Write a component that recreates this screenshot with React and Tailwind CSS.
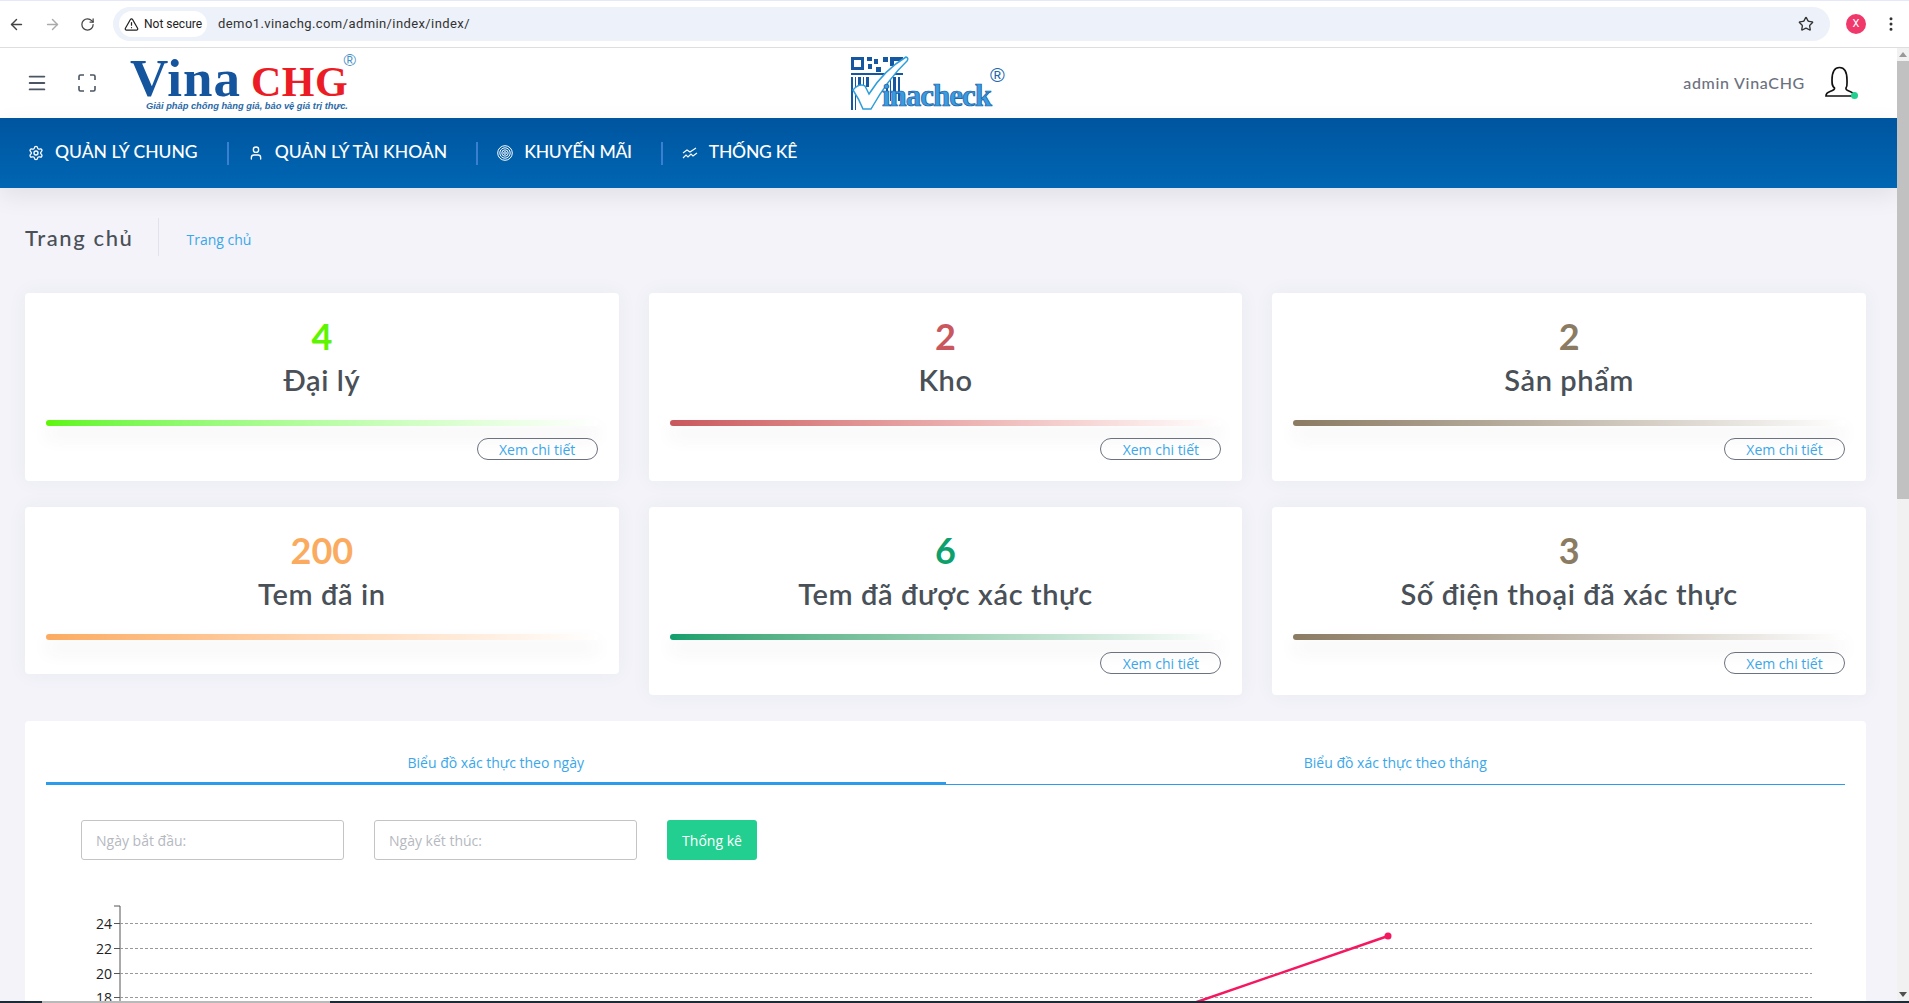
import React from "react";
import {
  ArrowLeft,
  ArrowRight,
  RotateCw,
  TriangleAlert,
  Star,
  EllipsisVertical,
  Menu,
  Settings,
  User,
} from "lucide-react";

const cardsTop = [
  { value: "4", label: "Đại lý", color: "text-[#5df500]", bar: "from-[#5df500]", link: true },
  { value: "2", label: "Kho", color: "text-[#c9575d]", bar: "from-[#c9575d]", link: true },
  { value: "2", label: "Sản phẩm", color: "text-[#8b7b63]", bar: "from-[#8b7b63]", link: true },
];

const cardsBottom = [
  { value: "200", label: "Tem đã in", color: "text-[#fbab60]", bar: "from-[#fbab60]", link: false },
  { value: "6", label: "Tem đã được xác thực", color: "text-[#0d9f6c]", bar: "from-[#0d9f6c]", link: true },
  { value: "3", label: "Số điện thoại đã xác thực", color: "text-[#8b7b63]", bar: "from-[#8b7b63]", link: true },
];

const FocusIcon = () => (
  <svg width="18" height="18" viewBox="0 0 18 18" fill="none" stroke="#4b5563" strokeWidth="1.6">
    <path d="M1 6V2.500A1.500 1.500 0 0 1 2.500 1H6M12 1h3.500A1.500 1.500 0 0 1 17 2.500V6M17 12v3.500a1.500 1.500 0 0 1-1.500 1.500H12M6 17H2.500A1.500 1.500 0 0 1 1 15.500V12" />
  </svg>
);

const TargetIcon = () => (
  <svg width="16" height="16" viewBox="0 0 16 16" fill="none" stroke="white" strokeWidth="1">
    <circle cx="8" cy="8" r="7.300" />
    <circle cx="8" cy="8" r="5.200" />
    <circle cx="8" cy="8" r="3.200" />
    <circle cx="8" cy="8" r="1.300" />
  </svg>
);

const StatsIcon = () => (
  <svg width="16" height="14" viewBox="0 0 16 14" fill="none" stroke="white" strokeWidth="1.100">
    <path d="M1 7 5 4l3 2 6-4" />
    <path d="M1 12l3-3 2 2 3-3 2 2 4-3" />
  </svg>
);

const AdminIcon = () => (
  <svg width="32" height="34" viewBox="0 0 32 34" fill="none" stroke="#111" strokeWidth="1.700">
    <path d="M8 14C8 5 11 1.500 15.500 1.500S23 5 23 14c0 4 .5 6-1 8-.5 1.500 1 2.500 4 3.500 3 1 4 2 4 4.500H2c0-2.500 1-3.500 4-4.500 3-1 5-2 4.500-3.500C8 20 8 18 8 14Z" />
  </svg>
);

const VinaChgLogo = () => (
  <div className="relative w-[228px] h-[62px] ml-[34px] mt-[-1px] font-['Liberation_Serif',serif] font-bold">
    <div className="flex items-baseline h-[50px] leading-none">
      <span className="text-[53px] tracking-[1px] text-[#14559e]">Vina</span>
      <span className="text-[42px] text-[#ec1c24] ml-[10px] tracking-[0.5px]">CHG</span>
    </div>
    <span className="absolute right-[2px] top-[-4px] text-[17px] font-normal text-[#4a8fc7] font-['Liberation_Sans',sans-serif]">®</span>
    <p className="absolute left-[16px] top-[48px] whitespace-nowrap text-[9.300px] italic text-[#2a69a8] font-['Liberation_Sans',sans-serif]">
      Giải pháp chống hàng giả, bảo vệ giá trị thực.
    </p>
  </div>
);

const VinacheckLogo = () => (
  <div className="relative w-[155px] h-[56px]">
    <svg width="60" height="56" viewBox="0 0 60 56" className="absolute left-0 top-0">
      <g fill="#1557a0">
        <path fillRule="evenodd" d="M1 2h13v13H1Zm3 3v7h7V5Z" />
        <rect x="17" y="2" width="5" height="4" />
        <rect x="24" y="4" width="4" height="5" />
        <rect x="18" y="9" width="4" height="5" />
        <rect x="26" y="12" width="5" height="5" />
        <rect x="33" y="2" width="5" height="5" />
        <path fillRule="evenodd" d="M40 2h13v4H44v5h-4Z" />
        <rect x="1" y="18" width="52" height="2" />
        <rect x="1" y="22" width="2" height="33" />
        <rect x="5" y="22" width="1" height="33" />
        <rect x="8" y="22" width="3" height="18" />
        <rect x="13" y="22" width="1" height="18" />
        <rect x="16" y="22" width="3" height="10" />
        <rect x="36" y="22" width="2" height="24" />
        <rect x="40" y="22" width="1" height="24" />
        <rect x="43" y="22" width="3" height="24" />
        <rect x="48" y="22" width="2" height="24" />
      </g>
      <path d="M3 35 Q9 28 15 31 L19 39 Q34 15 56 2 Q59 3 57 6 Q38 24 21 54 L13 54 Q9 44 3 35 Z" fill="#fff" stroke="#2f9fdc" strokeWidth="1.500" />
    </svg>
    <span className="absolute left-[32px] top-[25px] text-[31px] leading-none font-bold tracking-[-1px] text-[#3a9be0] font-['Liberation_Serif',serif] [-webkit-text-stroke:0.7px_#14589f]">
      inacheck
    </span>
    <span className="absolute left-[140px] top-[10px] text-[20px] leading-none text-[#2266ad] font-['Liberation_Sans',sans-serif]">®</span>
  </div>
);

const BrowserBar = () => (
  <div className="h-[48px] bg-white border-b border-[#dedede] border-t-[1px] border-t-[#e4e8f8] flex items-center shrink-0 font-['Roboto',sans-serif]">
    <div className="w-[113px] flex items-center pl-[8px] gap-[19px] text-[#444]">
      <ArrowLeft size={17} />
      <ArrowRight size={17} className="text-[#aaa]" />
      <RotateCw size={15} />
    </div>
    <div className="w-[1717px] h-[34px] bg-[#edf1f9] rounded-full flex items-center pl-[6px] pr-[16px]">
      <div className="h-[26px] bg-white rounded-full flex items-center gap-[5px] px-[5px] text-[12px] text-[#222]">
        <TriangleAlert size={15} />
        <span>Not secure</span>
      </div>
      <span className="ml-[11px] text-[13px] text-[#333] tracking-[0.4px]">demo1.vinachg.com/admin/index/index/</span>
      <Star size={16} className="ml-auto text-[#333]" />
    </div>
    <div className="flex-1 flex items-center pl-[16px]">
      <div className="w-[20px] h-[20px] rounded-full bg-[#f0386b] text-white text-[11px] flex items-center justify-center">X</div>
      <EllipsisVertical size={18} className="ml-[16px] text-[#333]" />
    </div>
  </div>
);

const TopHeader = () => (
  <header className="h-[70px] bg-white flex items-center font-['Lato',sans-serif]">
    <div className="w-[850px] flex items-center pl-[26px] shrink-0">
      <Menu size={22} className="text-[#4b5563]" />
      <div className="ml-[30px]"><FocusIcon /></div>
      <VinaChgLogo />
    </div>
    <VinacheckLogo />
    <div className="flex-1 flex items-center justify-end pr-[41px]">
      <span className="text-[16px] font-medium text-[#6c7180] tracking-[0.7px]">admin VinaCHG</span>
      <div className="relative ml-[19px] w-[32px] h-[34px]">
        <AdminIcon />
        <span className="absolute right-[-2px] bottom-[1px] w-[7px] h-[7px] rounded-full bg-[#22d08f]"></span>
      </div>
    </div>
  </header>
);

const NavItem = ({ icon, label, last, tight }) => (
  <div className="flex items-center">
    <span className="w-[16px] flex justify-center">{icon}</span>
    <span className={`ml-[11px] text-[17.500px] font-medium text-white whitespace-nowrap pb-[2px] ${tight ? "tracking-[-0.25px]" : ""}`}>{label}</span>
    {!last && <span className="ml-[29px] mr-[19px] w-[2px] h-[23px] bg-[#3a7fd0]"></span>}
  </div>
);

const MainNav = () => (
  <nav className="h-[70px] bg-linear-to-b from-[#00559f] to-[#0066b3] flex items-center pl-[28px] font-['Lato',sans-serif] shadow-[0_8px_24px_rgba(0,0,0,0.08)] relative">
    <NavItem icon={<Settings size={16} color="white" />} label="QUẢN LÝ CHUNG" />
    <NavItem icon={<User size={16} color="white" />} label="QUẢN LÝ TÀI KHOẢN" />
    <NavItem icon={<TargetIcon />} label="KHUYẾN MÃI" tight />
    <NavItem icon={<StatsIcon />} label="THỐNG KÊ" last tight />
  </nav>
);

const StatCard = ({ value, label, color, bar, link }) => (
  <div className={`bg-white rounded-[4px] shadow-[0_0_20px_rgba(60,60,100,0.05)] px-[21px] pt-[24px] flex flex-col self-start w-full ${link ? "pb-[21px]" : "pb-[34px]"}`}>
    <div className={`text-center text-[36px] leading-[38px] font-bold font-['Lato',sans-serif] ${color}`}>{value}</div>
    <div className="text-center text-[29px] tracking-[0.6px] leading-[38px] mt-[6px] font-semibold text-[#495057] font-['Lato',sans-serif]">{label}</div>
    <div className={`mt-[21px] h-[6px] rounded-full bg-linear-to-r ${bar} to-white shadow-[0_10px_18px_rgba(60,60,100,0.10)]`}></div>
    {link && (
      <div className="flex justify-end mt-[12px]">
        <a className="w-[121px] h-[22px] rounded-full border border-[#6b7280] flex items-center justify-center text-[14px] text-[#3aa7ea] font-['Open_Sans',sans-serif]">
          Xem chi tiết
        </a>
      </div>
    )}
  </div>
);

const ChartArea = () => (
  <svg width="1800" height="100" viewBox="0 0 1800 100" className="block font-['Open_Sans',sans-serif]">
    <path d="M34 1h6v100" fill="none" stroke="#555" strokeWidth="1" />
    {[
      { y: 18.500, t: "24" },
      { y: 43.500, t: "22" },
      { y: 68.500, t: "20" },
      { y: 92.500, t: "18" },
    ].map((g) => (
      <g key={g.t}>
        <line x1="34" x2="40" y1={g.y} y2={g.y} stroke="#555" />
        <line x1="40" x2="1732" y1={g.y} y2={g.y} stroke="#999" strokeDasharray="3 2" />
        <text x="32" y={g.y + 5} textAnchor="end" fontSize="14" fill="#222">{g.t}</text>
      </g>
    ))}
    <line x1="1111" y1="99" x2="1308" y2="31" stroke="#f5175f" strokeWidth="2.500" />
    <circle cx="1308" cy="31" r="3.500" fill="#f5175f" />
  </svg>
);

const App = () => {
  return (
    <div className="relative h-[1003px] w-[1909px] overflow-hidden bg-[#f3f3f9]">
      <BrowserBar />
      <div className="flex h-[955px]">
        <div className="w-[1897px] shrink-0 overflow-hidden">
          <TopHeader />
          <MainNav />

          <div className="pl-[25px] pr-[31px]">
            <div className="flex items-center h-[50px] mt-[24px]">
              <h1 className="text-[22px] text-[#495057] tracking-[1.600px] font-medium font-['Lato',sans-serif]">Trang chủ</h1>
              <span className="ml-[25px] w-px h-[38px] bg-[#e2e2ea]"></span>
              <span className="ml-[27px] mt-[4px] text-[14px] text-[#3aa7ea] font-['Open_Sans',sans-serif]">Trang chủ</span>
            </div>

            <div className="grid grid-cols-3 gap-x-[30px] mt-[31px]">
              {cardsTop.map((c) => <StatCard key={c.label} {...c} />)}
            </div>
            <div className="grid grid-cols-3 gap-x-[30px] mt-[26px]">
              {cardsBottom.map((c) => <StatCard key={c.label} {...c} />)}
            </div>

            <section className="bg-white rounded-[4px] mt-[26px] px-[21px] pt-[31px] h-[400px]">
              <div className="grid grid-cols-2 text-center text-[14px] text-[#3aa7ea] font-['Open_Sans',sans-serif]">
                <div className="h-[33px] border-b-[3px] border-[#2a9ceb]">Biểu đồ xác thực theo ngày</div>
                <div className="h-[33px] border-b border-[#2a9ceb]">Biểu đồ xác thực theo tháng</div>
              </div>
              <div className="flex items-center mt-[35px] pl-[35px] gap-[30px] font-['Open_Sans',sans-serif]">
                <div className="w-[263px] h-[40px] rounded-[3px] border border-[#c4c4c4] flex items-center pl-[14px] text-[14px] text-[#b5b9bf]">Ngày bắt đầu:</div>
                <div className="w-[263px] h-[40px] rounded-[3px] border border-[#c4c4c4] flex items-center pl-[14px] text-[14px] text-[#b5b9bf]">Ngày kết thúc:</div>
                <button className="w-[90px] h-[40px] rounded-[3px] bg-[#22cf90] text-white text-[14px]">Thống kê</button>
              </div>
              <div className="mt-[45px] ml-[34px]">
                <ChartArea />
              </div>
            </section>
          </div>
        </div>

        <div className="flex-1 bg-[#f1f1f1] flex flex-col items-center relative">
          <span className="mt-[4px] w-0 h-0 border-x-[4px] border-x-transparent border-b-[5px] border-b-[#999]"></span>
          <div className="mt-[4px] w-full h-[438px] bg-[#c1c1c1]"></div>
          <span className="absolute bottom-[6px] w-0 h-0 border-x-[4px] border-x-transparent border-t-[5px] border-t-[#505050]"></span>
        </div>
      </div>

      <div className="absolute left-0 right-0 bottom-0 h-[2px] bg-[#1c2b38]">
        <div className="ml-[42px] w-[288px] h-full bg-[#b9b9b9]"></div>
      </div>
    </div>
  );
};

export default App;
